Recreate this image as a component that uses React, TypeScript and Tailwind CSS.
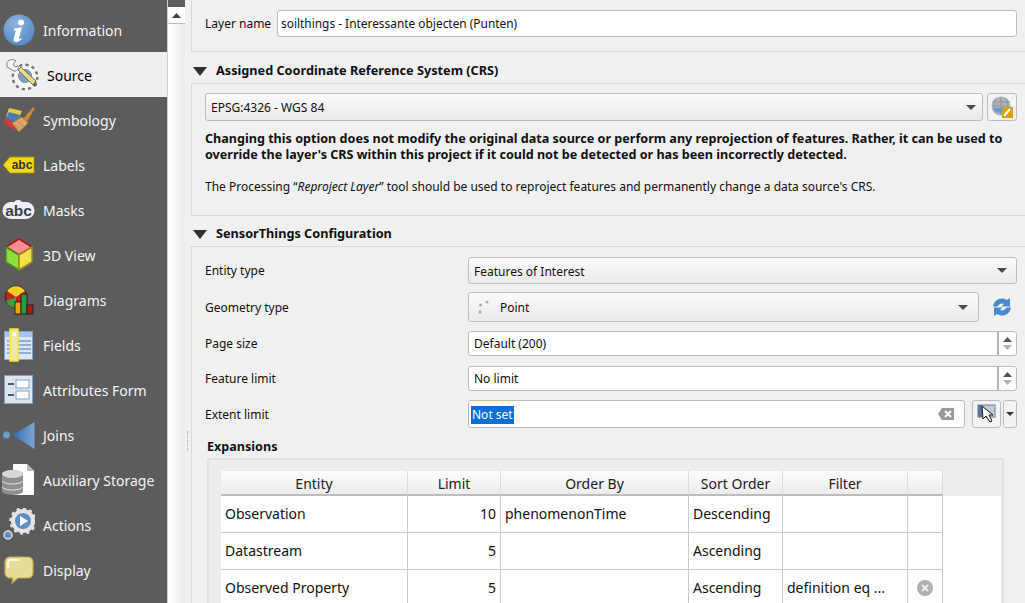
import React from 'react';

const font = 'font-["Noto_Sans","Open_Sans",sans-serif]';

function InfoIcon() {
  return (
    <svg width="32" height="32" viewBox="0 0 32 32">
      <defs>
        <radialGradient id="inf" cx="0.4" cy="0.3" r="0.8">
          <stop offset="0" stopColor="#8fb4dc" />
          <stop offset="1" stopColor="#4d86c4" />
        </radialGradient>
      </defs>
      <circle cx="16" cy="16" r="15.5" fill="url(#inf)" />
      <circle cx="18" cy="8.5" r="3" fill="#fff" />
      <path d="M11 14.5l8-1.2-3 11c-.2 1 .6 1 2.4-.6l.6.8c-2.4 3-4.6 3.8-6.6 3.6-1.8-.2-2.2-1.6-1.8-3.2l2.2-8.2-1.8-.4z" fill="#fff" />
    </svg>
  );
}

function SourceIcon() {
  return (
    <svg width="33" height="32" viewBox="0 0 33 32">
      <circle cx="19" cy="18" r="12" fill="none" stroke="#777" strokeWidth="3" strokeDasharray="3 3.300" />
      <circle cx="19" cy="18" r="11" fill="#f6f6f6" />
      <circle cx="19" cy="17" r="6.500" fill="#7da2cb" stroke="#777" strokeWidth="0.800" />
      <path d="M1 3.500C3 0 8 0 10 2L7 5l2 3 3-1c1 3-1 5.500-4 5L1 8z" fill="#f7f7f7" stroke="#666" strokeWidth="0.800" />
      <path d="M12 11l3-3 15 14-3 4z" fill="#ecd983" stroke="#555" strokeWidth="0.800" />
      <path d="M27 26l3-4 1 4-2 2z" fill="#666" />
    </svg>
  );
}

function SymbologyIcon() {
  return (
    <svg width="32" height="26" viewBox="0 0 32 26">
      <path d="M3 10L6 1l13 3-4 9z" fill="#e4cc4a" />
      <path d="M2 13l4-8 11 3-4 8z" fill="#4a78b8" />
      <path d="M0 16l4-5 10 7-2 5z" fill="#cf3a3a" />
      <path d="M20 12L30 0l1.800 1.500L24 15z" fill="#c88a3a" />
      <path d="M9 16l10-6 6 6-9 9z" fill="#dda56a" stroke="#b27a3c" />
      <path d="M12 18l6 5M15 15l6 5" stroke="#b27a3c" strokeWidth="0.8" />
    </svg>
  );
}

function LabelsIcon() {
  return (
    <svg width="32" height="18" viewBox="0 0 32 18">
      <path d="M0 9L7 1h24v16H7z" fill="#f4d90e" stroke="#a38f10" strokeWidth="0.8" />
      <text x="19" y="13" textAnchor="middle" fontSize="12" fontWeight="700" fill="#333" fontFamily="Liberation Sans, sans-serif">abc</text>
    </svg>
  );
}

function MasksIcon() {
  return (
    <svg width="33" height="20" viewBox="0 0 33 20">
      <rect x="0.500" y="2" width="32" height="17" rx="8.500" fill="#eef0f6" />
      <circle cx="16" cy="5" r="5" fill="#eef0f6" />
      <text x="16.500" y="15.500" textAnchor="middle" fontSize="15.500" fontWeight="700" fill="#3b3f4a" fontFamily="Liberation Sans, sans-serif">abc</text>
    </svg>
  );
}

function View3DIcon() {
  return (
    <svg width="30" height="33" viewBox="0 0 30 33">
      <path d="M15 1l13 8-13 8L2 9z" fill="#f58f8f" stroke="#b01010" strokeWidth="1.500" />
      <path d="M2 9l13 8v15L2 24z" fill="#8fdc3a" stroke="#4f8a20" strokeWidth="1.500" />
      <path d="M28 9l-13 8v15l13-8z" fill="#f4e04a" stroke="#a08a20" strokeWidth="1.500" />
    </svg>
  );
}

function DiagramsIcon() {
  return (
    <svg width="30" height="30" viewBox="0 0 30 30">
      <circle cx="12" cy="12" r="11" fill="#c42020" stroke="#222" />
      <path d="M12 12L3 6a11 11 0 0 1 18 0z" fill="#f4d020" />
      <path d="M12 12v11a11 11 0 0 1-10-7z" fill="#3aa040" />
      <rect x="11" y="17" width="6" height="12" fill="#f4a010" stroke="#222" />
      <rect x="17" y="9" width="6" height="20" fill="#2a9a40" stroke="#222" />
      <rect x="23" y="20" width="6" height="9" fill="#b01818" stroke="#222" />
    </svg>
  );
}

function FieldsIcon() {
  return (
    <svg width="30" height="34" viewBox="0 0 30 34">
      <rect x="0.500" y="3.500" width="28" height="28" fill="#dfe6ef" stroke="#7ba3d2" />
      <rect x="1" y="4" width="27" height="5" fill="#a7c5e6" />
      <path d="M14 13h13M14 17h13M14 21h13M14 25h13M3 13h3M3 17h3M3 21h3M3 25h3" stroke="#7b9cc4" strokeWidth="1.500" />
      <rect x="6" y="1" width="8" height="32" fill="#efe6a8" stroke="#f2ee20" strokeWidth="1.500" />
      <rect x="9" y="5" width="3" height="3" fill="#fff" />
    </svg>
  );
}

function FormIcon() {
  return (
    <svg width="30" height="30" viewBox="0 0 30 30">
      <rect x="0.500" y="0.500" width="28" height="28" fill="#dfe5ee" stroke="#7ba3d2" />
      <rect x="4" y="8" width="6" height="2" fill="#4a5a6e" />
      <rect x="4" y="19" width="6" height="2" fill="#4a5a6e" />
      <rect x="12" y="5" width="13" height="8" fill="#fff" stroke="#7ba3d2" />
      <rect x="12" y="16" width="13" height="8" fill="#fff" stroke="#7ba3d2" />
    </svg>
  );
}

function JoinsIcon() {
  return (
    <svg width="32" height="28" viewBox="0 0 32 28">
      <defs>
        <linearGradient id="jn" x1="0" x2="1" y1="0" y2="0">
          <stop offset="0" stopColor="#2f6cb0" />
          <stop offset="1" stopColor="#7ea6d2" />
        </linearGradient>
      </defs>
      <circle cx="3.500" cy="14" r="3.500" fill="#6c9bd0" />
      <path d="M9.500 14L31.500 1v27z" fill="url(#jn)" />
    </svg>
  );
}

function AuxIcon() {
  return (
    <svg width="33" height="33" viewBox="0 0 33 33">
      <path d="M11 1h14l7 7v24H11z" fill="#fff" />
      <path d="M25 1l7 7h-7z" fill="#bbb" />
      <path d="M0 11c0-5 21-5 21 0v17c0 5-21 5-21 0z" fill="#8f8f8f" />
      <ellipse cx="10.500" cy="11" rx="10.500" ry="4" fill="#d8d8d8" />
      <path d="M0 18c3 4 18 4 21 0M0 24c3 4 18 4 21 0" stroke="#e5e5e5" fill="none" />
    </svg>
  );
}

function ActionsIcon() {
  return (
    <svg width="33" height="33" viewBox="0 0 33 33">
      <circle cx="21" cy="13" r="10" fill="#5f8fc6" stroke="#e4e4e4" strokeWidth="4" />
      <circle cx="21" cy="13" r="12.500" fill="none" stroke="#e4e4e4" strokeWidth="2.500" strokeDasharray="3 3.500" />
      <path d="M18 8l8 5-8 5z" fill="#fff" />
      <circle cx="6" cy="27" r="4" fill="#5f8fc6" stroke="#ddd" strokeWidth="1.500" />
    </svg>
  );
}

function DisplayIcon() {
  return (
    <svg width="30" height="28" viewBox="0 0 30 28">
      <path d="M6 1h18a5 5 0 0 1 5 5v11a5 5 0 0 1-5 5H14l-6 5 1-5H6a5 5 0 0 1-5-5V6a5 5 0 0 1 5-5z" fill="#e8dc96" stroke="#c2ab52" strokeWidth="1.200" />
      <path d="M4 12V7a3 3 0 0 1 3-3h8" stroke="#fff" strokeWidth="1.500" fill="none" />
    </svg>
  );
}

function TriDown({ className }: { className: string }) {
  return (
    <svg className={className} width="16" height="9" viewBox="0 0 16 9">
      <path d="M1 0h14L8 9z" fill="#2f2f2f" />
    </svg>
  );
}

function ComboArrow() {
  return (
    <svg width="10" height="5" viewBox="0 0 10 5">
      <path d="M0 0h10L5 5z" fill="#4a4a4a" />
    </svg>
  );
}

function Spin() {
  return (
    <div className="flex w-[19px] flex-col items-center justify-center gap-[3px] border-l-2 border-[#b5b5b5]">
      <svg width="9" height="5" viewBox="0 0 9 5"><path d="M0 5h9L4.500 0z" fill="#555" /></svg>
      <svg width="9" height="5" viewBox="0 0 9 5"><path d="M0 0h9L4.500 5z" fill="#b0b0b0" /></svg>
    </div>
  );
}

const navItems: [string, React.ReactNode][] = [
  ['Information', <InfoIcon />],
  ['Source', <SourceIcon />],
  ['Symbology', <SymbologyIcon />],
  ['Labels', <LabelsIcon />],
  ['Masks', <MasksIcon />],
  ['3D View', <View3DIcon />],
  ['Diagrams', <DiagramsIcon />],
  ['Fields', <FieldsIcon />],
  ['Attributes Form', <FormIcon />],
  ['Joins', <JoinsIcon />],
  ['Auxiliary Storage', <AuxIcon />],
  ['Actions', <ActionsIcon />],
  ['Display', <DisplayIcon />],
];

function NavItem({ label, icon }: { label: string; icon: React.ReactNode }) {
  const active = label === 'Source';
  return (
    <div className={`flex h-[45px] w-[167px] shrink-0 items-center ${active ? 'bg-[#efefef] text-black' : 'text-[#f4f4f4]'}`}>
      <div className={`flex w-[35px] shrink-0 items-center justify-center ${active ? 'ml-[5px] mr-[7px]' : 'ml-px mr-[7px]'}`}>{icon}</div>
      <span className="whitespace-nowrap pt-[2px] text-[14px]">{label}</span>
    </div>
  );
}

function SectionHeader({ title, className }: { title: string; className: string }) {
  return (
    <div className={`flex h-[20px] items-center ${className}`}>
      <TriDown className="ml-px mr-[8px] shrink-0" />
      <span className="text-[12.700px] font-bold text-[#111]">{title}</span>
    </div>
  );
}

function FormRow({ label, children, className }: { label: string; children: React.ReactNode; className: string }) {
  return (
    <div className={`flex items-center ${className}`}>
      <span className="w-[263px] shrink-0 pt-px text-[12px] text-[#111]">{label}</span>
      {children}
    </div>
  );
}

const comboCls = 'flex items-center rounded-[3px] border border-[#bcbcbc] bg-gradient-to-b from-[#fbfbfb] to-[#eaeaea] text-[12px] text-[#111]';
const cell = 'flex items-center border-b border-r border-[#cbcbcb] px-[4px] pb-px text-[14px] text-[#111] whitespace-nowrap';
const headCell = 'flex items-center justify-center border-b-2 border-r border-[#bdbdbd] border-r-[#dcdcdc] bg-gradient-to-b from-[#fdfdfd] to-[#ececec] pt-[2px] text-[14px] text-[#222]';
const colW = 'grid grid-cols-[187px_93px_188px_94px_125px_35px]';

const rows = [
  ['Observation', '10', 'phenomenonTime', 'Descending', ''],
  ['Datastream', '5', '', 'Ascending', ''],
  ['Observed Property', '5', '', 'Ascending', 'definition eq ...'],
];

export default function App() {
  return (
    <div className={`flex h-[603px] w-[1025px] overflow-hidden bg-[#f0f0f0] ${font}`}>
      <div className="flex h-full w-[168px] shrink-0 flex-col overflow-hidden border-r border-[#d0d0d0] bg-[#5c5c5c] pt-[7px]">
        {navItems.map(([label, icon]) => (
          <NavItem key={label} label={label} icon={icon} />
        ))}
      </div>

      {/* scrollbar of the list */}
      <div className="flex h-full w-[17px] shrink-0 flex-col">
        <div className="h-[7px] shrink-0 bg-[#5c5c5c]" />
        <div className="flex h-[17px] shrink-0 items-center justify-center border-b border-[#bcbcbc] bg-white">
          <svg width="9" height="5" viewBox="0 0 9 5"><path d="M0 5h9L4.500 0z" fill="#444" /></svg>
        </div>
        <div className="flex-1 bg-gradient-to-r from-[#ffffff] to-[#ececec]" />
      </div>

      {/* splitter */}
      <div className="relative w-[6px] shrink-0 bg-[#f0f0f0]">
        <div className="absolute left-[2px] top-[431px] h-[20px] w-px border-l border-dotted border-[#a8a8a8]" />
      </div>

      <div className="flex min-w-0 flex-1 flex-col">
        <div className="flex h-[52px] shrink-0 items-start rounded-bl-[2px] border-b border-l border-[#d8d8d8] pl-[13px] pt-[10px]">
          <span className="mt-[5px] w-[72px] shrink-0 text-[12px] text-[#111]">Layer name</span>
          <div className="flex h-[27px] w-[740px] items-center rounded-[3px] border border-[#bcbcbc] bg-white pl-[3px] pt-px text-[11.900px] text-[#111]">
            soilthings - Interessante objecten (Punten)
          </div>
        </div>

        <SectionHeader title="Assigned Coordinate Reference System (CRS)" className="mb-[2px] mt-[9px]" />

        <div className="flex h-[133px] shrink-0 flex-col border border-r-0 border-[#d8d8d8] pl-[13px] pt-[9px]">
          <div className="flex items-center">
            <div className={`${comboCls} h-[28px] w-[778px] justify-between pl-[5px] pr-[5px]`}>
              <span className="pt-[2px]">EPSG:4326 - WGS 84</span>
              <span className="mr-[1px]"><ComboArrow /></span>
            </div>
            <div className="ml-[4px] flex h-[28px] w-[30px] items-center justify-center rounded-[3px] border border-[#bcbcbc] bg-[#f3f3f3]">
              <svg width="24" height="24" viewBox="0 0 24 24">
                <circle cx="11" cy="11" r="9.500" fill="#aeb4bb" />
                <path d="M3 13a9 9 0 0 0 16 0z" fill="#5e9be0" />
                <path d="M2 7h18M2 11h18M11 2v18M6 3c-2 5-2 11 0 16M16 3c2 5 2 11 0 16" stroke="#8d8d8d" fill="none" strokeWidth="0.700" />
                <rect x="12" y="12" width="11" height="11" fill="#d6a50c" />
                <path d="M14 21l6-7" stroke="#fff" strokeWidth="2" />
              </svg>
            </div>
          </div>
          <p className="mt-[10px] w-[815px] text-[12.600px] font-bold leading-[16px] text-[#111]">
            Changing this option does not modify the original data source or perform any reprojection of features. Rather, it can be used to override the layer's CRS within this project if it could not be detected or has been incorrectly detected.
          </p>
          <p className="mt-[16px] text-[12px] leading-[16px] text-[#111]">
            The Processing “<i>Reproject Layer</i>” tool should be used to reproject features and permanently change a data source's CRS.
          </p>
        </div>

        <SectionHeader title="SensorThings Configuration" className="mb-[2px] mt-[8px]" />

        <div className="flex min-h-0 flex-1 flex-col border-l border-t border-[#d8d8d8] pl-[13px] pt-[10px]">
          <FormRow label="Entity type" className="h-[27px]">
            <div className={`${comboCls} h-[27px] w-[549px] justify-between pl-[5px] pr-[9px]`}>
              <span className="pt-[2px]">Features of Interest</span>
              <ComboArrow />
            </div>
          </FormRow>
          <FormRow label="Geometry type" className="mt-[8px] h-[30px]">
            <div className={`${comboCls} h-[30px] w-[511px] justify-between pl-[8px] pr-[10px]`}>
              <span className="flex items-center">
                <svg className="mr-[7px]" width="16" height="16" viewBox="0 0 16 16">
                  <circle cx="3.500" cy="6" r="1.500" fill="#aaa" />
                  <circle cx="10" cy="3" r="1.500" fill="#aaa" />
                  <circle cx="3" cy="13" r="1.500" fill="#aaa" />
                </svg>
                <span className="pt-[2px]">Point</span>
              </span>
              <ComboArrow />
            </div>
            <svg className="ml-[13px]" width="20" height="20" viewBox="0 0 20 20">
              <path d="M1 9.500a9 9 0 0 1 14-6.500l3-2v8.500h-8.500l2.500-2.500A5 5 0 0 0 5.500 9.500z" fill="#4a8ad0" />
              <path d="M19 10.500a9 9 0 0 1-14 6.500l-3 2v-8.500h8.500l-2.500 2.500a5 5 0 0 0 6.500-2.500z" fill="#4a8ad0" />
            </svg>
          </FormRow>
          <FormRow label="Page size" className="mt-[9px] h-[25px]">
            <div className="flex h-[25px] w-[549px] justify-between rounded-[3px] border border-[#bcbcbc] bg-white pl-[5px] text-[12px] text-[#111]">
              <span className="self-center">Default (200)</span>
              <Spin />
            </div>
          </FormRow>
          <FormRow label="Feature limit" className="mt-[10px] h-[25px]">
            <div className="flex h-[25px] w-[549px] justify-between rounded-[3px] border border-[#bcbcbc] bg-white pl-[5px] text-[12px] text-[#111]">
              <span className="self-center">No limit</span>
              <Spin />
            </div>
          </FormRow>
          <FormRow label="Extent limit" className="mt-[9px] h-[28px]">
            <div className="flex h-[28px] w-[497px] items-center justify-between rounded-[3px] border border-[#bcbcbc] bg-white pl-[2px] pr-[10px] text-[12px]">
              <span className="mt-[2px] bg-[#0a6fd6] px-[1px] text-white">Not set</span>
              <svg width="16" height="12" viewBox="0 0 16 12"><path d="M4 0h12v12H4L0 6z" fill="#9a9a9a" /><path d="M7 3l6 6M13 3l-6 6" stroke="#fff" strokeWidth="1.800" /></svg>
            </div>
            <div className="ml-[7px] flex h-[28px] w-[29px] items-center justify-center rounded-[3px] border border-[#bcbcbc] bg-[#f3f3f3]">
              <svg width="20" height="20" viewBox="0 0 20 20">
                <rect x="1" y="1" width="17" height="12" fill="#c3ccd6" stroke="#6f7f90" />
                <rect x="1" y="1" width="4" height="12" fill="#5b7896" />
                <path d="M5 2l1 13 3-3 4 6 2-1-3-6h4z" fill="#fff" stroke="#111" />
              </svg>
            </div>
            <div className="ml-[2px] flex h-[28px] w-[14px] items-center justify-center rounded-[3px] border border-[#bcbcbc] bg-[#f3f3f3]">
              <svg width="8" height="4" viewBox="0 0 8 4"><path d="M0 0h8L4 4z" fill="#333" /></svg>
            </div>
          </FormRow>

          <div className="ml-[2px] mt-[10px] text-[12.600px] font-bold leading-[17px] text-[#111]">Expansions</div>
          <div className="ml-[2px] mr-[21px] mt-[3px] flex-1 border-l-2 border-r-2 border-t-2 border-[#e0e0e0] bg-[#ececec] pl-[12px] pr-[1px] pt-[11px]">
            <div className="h-full bg-white">
              <div className="flex h-[25px] bg-[#ececec]">
                <div className={colW}>
                  {['Entity', 'Limit', 'Order By', 'Sort Order', 'Filter', ''].map((h) => (
                    <div key={h} className={headCell}>{h}</div>
                  ))}
                </div>
              </div>
              {rows.map((r) => (
                <div key={r[0]} className={`${colW} h-[37px] w-[722px]`}>
                  <div className={cell}>{r[0]}</div>
                  <div className={`${cell} justify-end`}>{r[1]}</div>
                  <div className={cell}>{r[2]}</div>
                  <div className={cell}>{r[3]}</div>
                  <div className={cell}>{r[4]}</div>
                  <div className={`${cell} justify-center`}>
                    {r[4] && (
                      <svg width="16" height="16" viewBox="0 0 16 16">
                        <circle cx="8" cy="8" r="8" fill="#b0b0b0" />
                        <path d="M5 5l6 6M11 5l-6 6" stroke="#eee" strokeWidth="2" />
                      </svg>
                    )}
                  </div>
                </div>
              ))}
            </div>
          </div>
        </div>
      </div>
    </div>
  );
}
